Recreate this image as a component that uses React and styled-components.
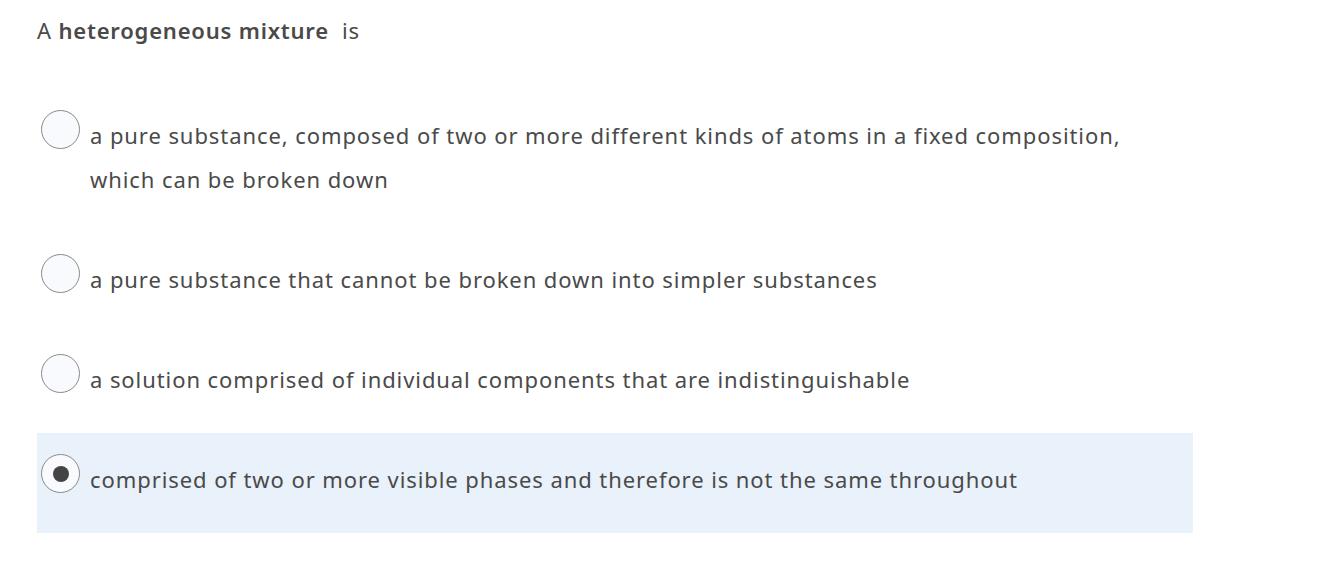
import React, { useState } from 'react';
import styled, { createGlobalStyle } from 'styled-components';

const GlobalStyle = createGlobalStyle`
  body {
    margin: 0;
    background: #fff;
    font-family: 'Noto Sans', 'Liberation Sans', Arial, sans-serif;
    color: #4a4a4a;
  }
`;

const Question = styled.div`
  padding: 13px 0 0 37px;
  width: 1156px;
`;

const Prompt = styled.div`
  font-size: 22px;
  line-height: 34px;
  letter-spacing: 0.8px;
  margin-bottom: 42px;

  b {
    font-weight: 600;
  }
`;

const Option = styled.label`
  display: flex;
  align-items: flex-start;
  gap: 10px;
  padding: 21px 40px 0 4px;
  min-height: 100px;
  box-sizing: border-box;
  background: ${(p) => (p.$selected ? '#e9f1fb' : 'transparent')};
  cursor: pointer;
`;

const Radio = styled.span`
  flex: none;
  width: 39px;
  height: 39px;
  box-sizing: border-box;
  border: 1px solid #8a8a8a;
  border-radius: 50%;
  background: #f9fafd;
  display: flex;
  align-items: center;
  justify-content: center;

  &::after {
    content: '';
    display: ${(p) => (p.$checked ? 'block' : 'none')};
    width: 16px;
    height: 16px;
    border-radius: 50%;
    background: #444;
  }
`;

const OptionText = styled.span`
  font-size: 22px;
  line-height: 44px;
  letter-spacing: 0.92px;
  padding: 3px 0 32px;
`;

const choices = [
  'a pure substance, composed of two or more different kinds of atoms in a fixed composition, which can be broken down',
  'a pure substance that cannot be broken down into simpler substances',
  'a solution comprised of individual components that are indistinguishable',
  'comprised of two or more visible phases and therefore is not the same throughout',
];

export default function App() {
  const [picked, setPicked] = useState(3);
  return (
    <>
      <GlobalStyle />
      <Question>
        <Prompt>
          A <b>heterogeneous mixture</b>&nbsp; is
        </Prompt>
        {choices.map((text, i) => (
          <Option key={i} $selected={picked === i} onClick={() => setPicked(i)}>
            <Radio $checked={picked === i} />
            <OptionText>{text}</OptionText>
          </Option>
        ))}
      </Question>
    </>
  );
}
